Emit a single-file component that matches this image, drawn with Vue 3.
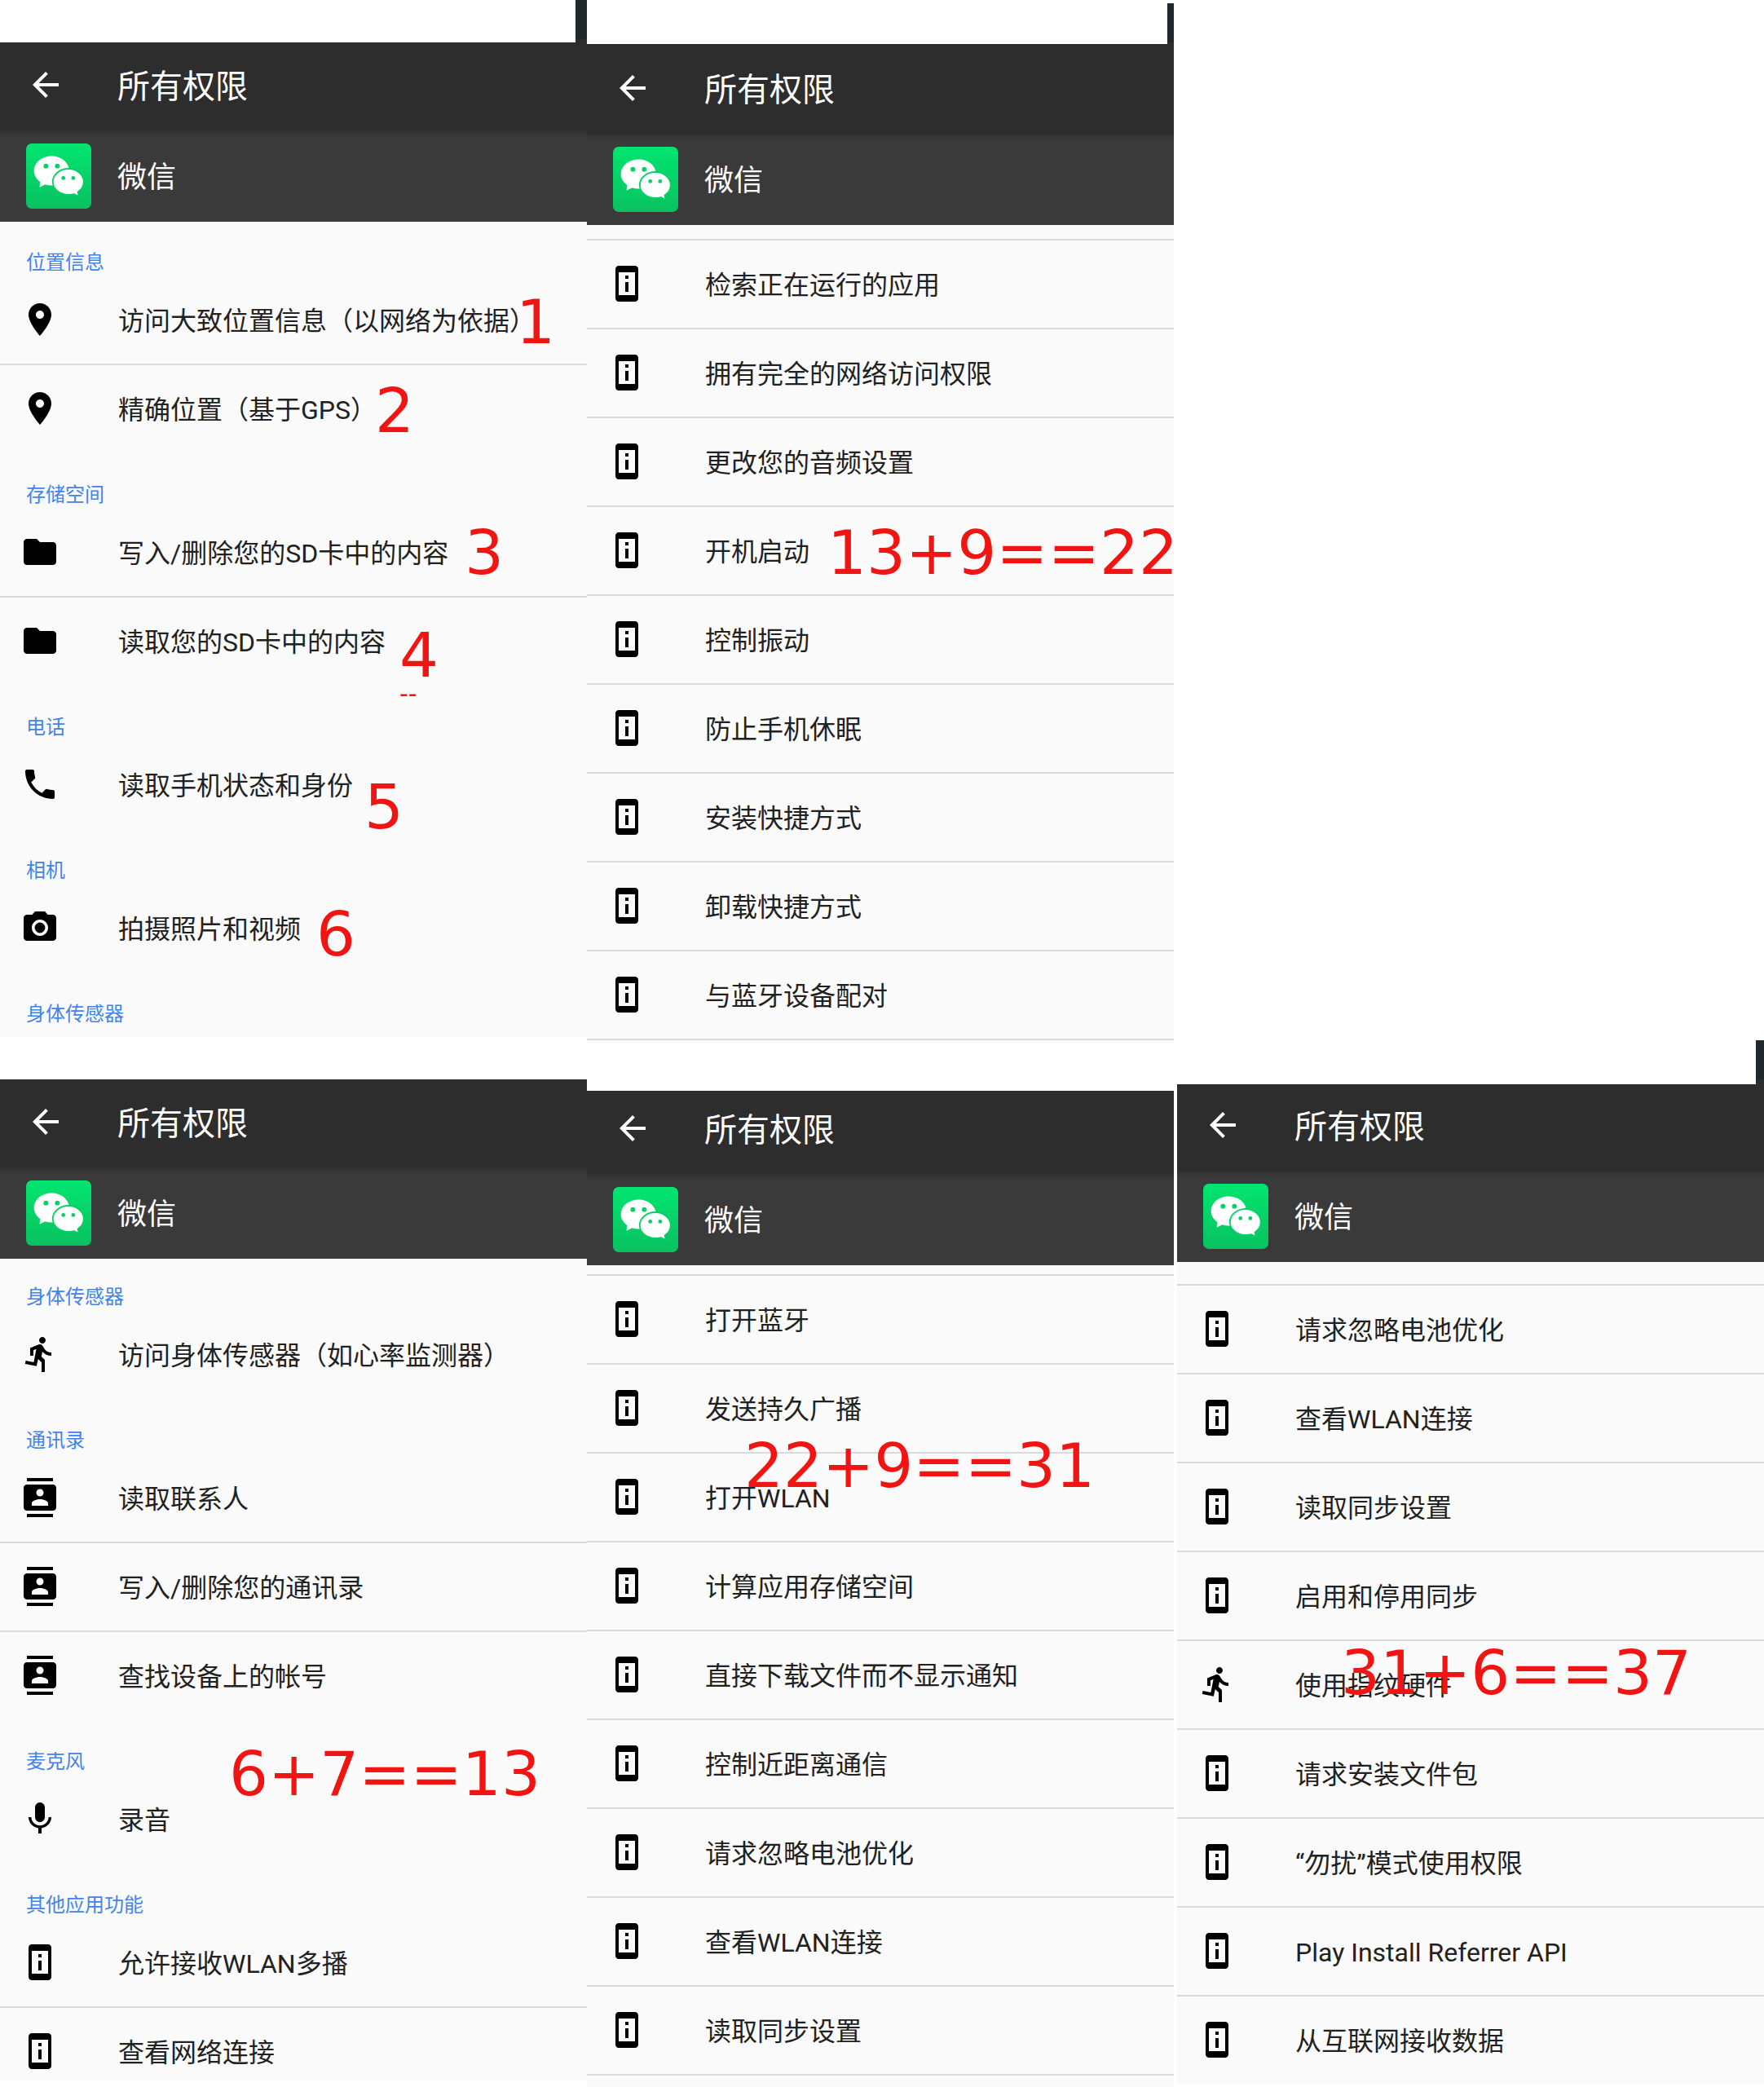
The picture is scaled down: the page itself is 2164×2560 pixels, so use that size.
<script setup>
const pin = 'M12 2C8.13 2 5 5.13 5 9c0 5.25 7 13 7 13s7-7.75 7-13c0-3.87-3.13-7-7-7zm0 9.5c-1.38 0-2.5-1.12-2.5-2.5s1.12-2.5 2.5-2.5 2.5 1.12 2.5 2.5-1.12 2.5-2.5 2.5z'
const folder = 'M10 4H4c-1.1 0-1.99.9-1.99 2L2 18c0 1.1.9 2 2 2h16c1.1 0 2-.9 2-2V8c0-1.1-.9-2-2-2h-8l-2-2z'
const phone = 'M6.62 10.79c1.44 2.83 3.76 5.14 6.59 6.59l2.2-2.2c.27-.27.67-.36 1.02-.24 1.12.37 2.33.57 3.57.57.55 0 1 .45 1 1V20c0 .55-.45 1-1 1-9.39 0-17-7.61-17-17 0-.55.45-1 1-1h3.5c.55 0 1 .45 1 1 0 1.25.2 2.45.57 3.57.11.35.03.74-.25 1.02l-2.2 2.2z'
const camera = 'M12 8.8a3.2 3.2 0 1 0 0 6.4 3.2 3.2 0 0 0 0-6.4zM9 2L7.17 4H4c-1.1 0-2 .9-2 2v12c0 1.1.9 2 2 2h16c1.1 0 2-.9 2-2V6c0-1.1-.9-2-2-2h-3.17L15 2H9zm3 15c-2.76 0-5-2.24-5-5s2.24-5 5-5 5 2.24 5 5-2.24 5-5 5z'
const run = 'M13.49 5.48c1.1 0 2-.9 2-2s-.9-2-2-2-2 .9-2 2 .9 2 2 2zm-3.6 13.9l1-4.4 2.1 2v6h2v-7.5l-2.1-2 .6-3c1.3 1.5 3.3 2.5 5.5 2.5v-2c-1.9 0-3.5-1-4.3-2.4l-1-1.6c-.4-.6-1-1-1.7-1-.3 0-.5.1-.8.1l-5.2 2.2v4.7h2v-3.4l1.8-.7-1.6 8.1-4.9-1-.4 2 7 1.4z'
const contacts = 'M20 0H4v2h16V0zM4 24h16v-2H4v2zM20 4H4c-1.1 0-2 .9-2 2v12c0 1.1.9 2 2 2h16c1.1 0 2-.9 2-2V6c0-1.1-.9-2-2-2zm-8 2.75c1.24 0 2.25 1.01 2.25 2.25s-1.01 2.25-2.25 2.25S9.75 10.24 9.75 9 10.76 6.75 12 6.75zM17 17H7v-1.5c0-1.67 3.33-2.5 5-2.5s5 .83 5 2.5V17z'
const mic = 'M12 14c1.66 0 2.99-1.34 2.99-3L15 5c0-1.66-1.34-3-3-3S9 3.34 9 5v6c0 1.66 1.34 3 3 3zm5.3-3c0 3-2.54 5.1-5.3 5.1S6.7 14 6.7 11H5c0 3.41 2.72 6.23 6 6.72V21h2v-3.28c3.28-.48 6-3.3 6-6.72h-1.7z'
const info = 'M11 7h2v2h-2zM11 11h2v6h-2zM17 1.01L7 1c-1.1 0-2 .9-2 2v18c0 1.1.9 2 2 2h10c1.1 0 2-.9 2-2V3c0-1.1-.9-1.99-2-1.99zM17 19H7V5h10v14z'

const rows = (icon, ...labels) => labels.map((label) => ({ icon, label }))

const columns = [
  [
    {
      name: 's1', offset: -2,
      groups: [
        { title: '位置信息', items: rows(pin, '访问大致位置信息（以网络为依据）', '精确位置（基于GPS）') },
        { title: '存储空间', items: rows(folder, '写入/删除您的SD卡中的内容', '读取您的SD卡中的内容') },
        { title: '电话', items: rows(phone, '读取手机状态和身份') },
        { title: '相机', items: rows(camera, '拍摄照片和视频') },
        { title: '身体传感器', items: [] },
      ],
      notes: [
        { text: '1', x: 633, y: 421 },
        { text: '2', x: 460, y: 530 },
        { text: '3', x: 570, y: 704 },
        { text: '4', x: 490, y: 830 },
        { text: '--', x: 490, y: 861, small: true },
        { text: '5', x: 447, y: 1016 },
        { text: '6', x: 388, y: 1172 },
      ],
    },
    {
      name: 's3', offset: -5,
      groups: [
        { title: '身体传感器', items: rows(run, '访问身体传感器（如心率监测器）') },
        { title: '通讯录', items: rows(contacts, '读取联系人', '写入/删除您的通讯录', '查找设备上的帐号') },
        { title: '麦克风', items: rows(mic, '录音') },
        { title: '其他应用功能', items: rows(info, '允许接收WLAN多播', '查看网络连接') },
      ],
      notes: [{ text: '6+7==13', x: 281, y: 930 }],
    },
  ],
  [
    {
      name: 's2', offset: 17,
      groups: [{
        items: rows(info, '检索正在运行的应用', '拥有完全的网络访问权限', '更改您的音频设置', '开机启动', '控制振动', '防止手机休眠', '安装快捷方式', '卸载快捷方式', '与蓝牙设备配对'),
        closed: true,
      }],
      notes: [{ text: '13+9==22', x: 295, y: 700 }],
    },
    {
      name: 's4', offset: 11,
      groups: [{
        items: rows(info, '打开蓝牙', '发送持久广播', '打开WLAN', '计算应用存储空间', '直接下载文件而不显示通知', '控制近距离通信', '请求忽略电池优化', '查看WLAN连接', '读取同步设置'),
        closed: true,
      }],
      notes: [{ text: '22+9==31', x: 193, y: 544 }],
    },
  ],
  [
    {
      name: 's5', offset: 27,
      groups: [{
        items: [
          ...rows(info, '请求忽略电池优化', '查看WLAN连接', '读取同步设置', '启用和停用同步'),
          ...rows(run, '使用指纹硬件'),
          ...rows(info, '请求安装文件包', '“勿扰”模式使用权限', 'Play Install Referrer API', '从互联网接收数据'),
        ],
        closed: true,
      }],
      notes: [{ text: '31+6==37', x: 201, y: 802 }],
    },
  ],
]
</script>

<template>
  <main class="board">
    <div v-for="(column, c) in columns" :key="c" class="column" :class="'column-' + c">
      <section v-for="screen in column" :key="screen.name" class="screen" :class="screen.name">
        <div class="status"></div>
        <div class="eraser"></div>
        <header class="toolbar">
          <svg class="back" viewBox="0 0 24 24"><path d="M20 11H7.830l5.590-5.590L12 4l-8 8 8 8 1.410-1.410L7.830 13H20v-2z" /></svg>
          <h1>所有权限</h1>
        </header>
        <div class="app">
          <svg class="logo" viewBox="0 0 80 80">
            <defs>
              <linearGradient :id="'green-' + screen.name" x1="0" y1="0" x2="0" y2="1">
                <stop offset="0" stop-color="#02e56f" />
                <stop offset="1" stop-color="#09c160" />
              </linearGradient>
            </defs>
            <rect width="80" height="80" rx="7" :fill="`url(#green-${screen.name})`" />
            <path fill="#fff" d="M31.3 15.5c-12 0-21.6 8-21.6 18 0 5.500 3 10.200 7.500 13.500L16.600 53.800l6.800-3.500c2.500.8 5.100 1.200 7.900 1.200 12 0 21.600-8 21.600-18s-9.600-18-21.600-18z" />
            <path fill="#fff" stroke="#06d066" stroke-width="1.800" d="M51.800 31c-10.500 0-19 7.200-19 16s8.500 16 19 16c2.400 0 4.700-.4 6.800-1l6 3.100-1.100-5.700c4.500-2.900 7.300-7.400 7.300-12.400 0-8.800-8.500-16-19-16z" />
            <g fill="#06d066">
              <circle cx="24.300" cy="27.700" r="2.900" /><circle cx="38.300" cy="27.700" r="2.900" />
              <circle cx="45.700" cy="42.400" r="2.400" /><circle cx="57.800" cy="42.400" r="2.400" />
            </g>
          </svg>
          <h2>微信</h2>
        </div>
        <div class="list" :style="{ marginTop: screen.offset + 'px' }">
          <div v-for="(group, g) in screen.groups" :key="g" class="group" :class="{ closed: group.closed }">
            <h3 v-if="group.title">{{ group.title }}</h3>
            <div v-for="item in group.items" :key="item.label" class="row">
              <svg class="icon" viewBox="0 0 24 24"><path fill-rule="evenodd" :d="item.icon" /></svg>
              <span>{{ item.label }}</span>
            </div>
          </div>
        </div>
        <span
          v-for="note in screen.notes"
          :key="note.text"
          class="note"
          :class="{ small: note.small }"
          :style="{ left: note.x + 'px', top: note.y + 'px' }"
        >{{ note.text }}</span>
      </section>
    </div>
  </main>
</template>

<style>
body {
  margin: 0;
  background: #fff;
}
</style>

<style scoped>
.board {
  display: flex;
  width: 2164px;
  height: 2560px;
  overflow: hidden;
  font-family: Roboto, "Noto Sans CJK SC", sans-serif;
}
.column {
  width: 720px;
  flex: none;
}
.column-1 {
  padding-top: 4px;
}
.column-2 {
  margin-left: 4px;
  padding-top: 1276px;
}
.screen {
  position: relative;
  height: 1280px;
  overflow: hidden;
  background: #fafafa;
}
.s1 {
  height: 1272px;
}
.s2 {
  height: 1276px;
}
.status {
  height: 48px;
  background: #21282c;
}
.eraser {
  position: absolute;
  z-index: 2;
  top: 0;
  left: 0;
  width: 720px;
  height: 52px;
  background: #fff;
}
.s1 .eraser {
  width: 706px;
}
.s2 .eraser {
  width: 712px;
  height: 50px;
}
.s4 .eraser {
  height: 58px;
}
.s5 .eraser {
  width: 710px;
  height: 54px;
}
.toolbar,
.app {
  display: flex;
  align-items: center;
  height: 112px;
  box-sizing: border-box;
  padding-left: 32px;
}
.toolbar {
  background: #2d2d2d;
}
.app {
  background: linear-gradient(#2e2e2e, #363636 4px, #3a3a3a 8px);
}
.back {
  width: 48px;
  height: 48px;
  margin-right: 64px;
  fill: #fff;
}
.logo {
  width: 80px;
  height: 80px;
  margin-right: 32px;
}
h1,
h2,
h3 {
  margin: 0;
  font-weight: 400;
}
h1 {
  padding-top: 6px;
  font-size: 40px;
  line-height: 48px;
  color: #fff;
}
h2 {
  padding-top: 3px;
  font-size: 36px;
  line-height: 44px;
  color: #fff;
}
h3 {
  height: 69px;
  box-sizing: border-box;
  padding: 37px 0 0 32px;
  font-size: 24px;
  line-height: 30px;
  color: #4384ea;
}
.row {
  display: flex;
  align-items: center;
  height: 107px;
  padding-left: 25px;
  font-size: 32px;
  line-height: 40px;
  color: #212121;
  white-space: nowrap;
}
.row span {
  padding-top: 3px;
}
.row + .row,
.closed .row:first-child {
  border-top: 2px solid #dadada;
}
.closed .row:last-child {
  border-bottom: 2px solid #dadada;
}
.icon {
  width: 48px;
  height: 48px;
  margin: 0 72px 1px 0;
  fill: #000;
}
.note {
  position: absolute;
  z-index: 3;
  margin-top: -63px;
  font-family: "DejaVu Sans", sans-serif;
  font-size: 75.5px;
  line-height: 75px;
  color: #f01412;
  white-space: nowrap;
}
.small {
  margin-top: -25px;
  font-size: 30px;
  line-height: 30px;
}
</style>
